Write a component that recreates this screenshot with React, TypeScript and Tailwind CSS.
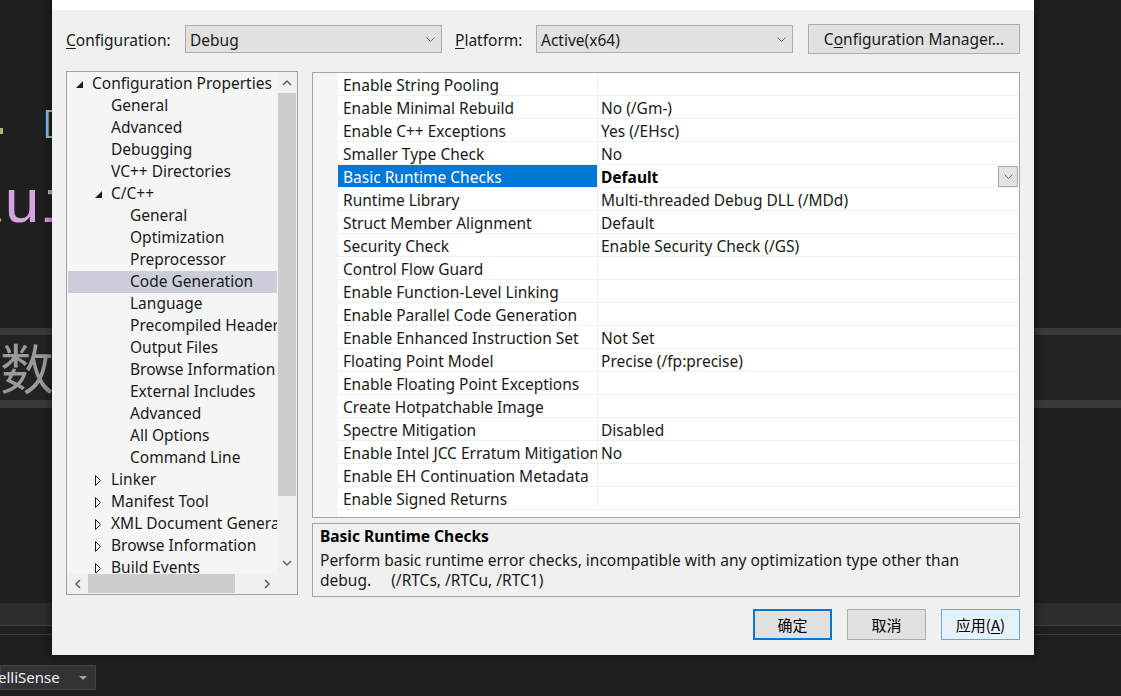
import React from 'react';

type TreeItem = { label: string; level: 0 | 1 | 2; exp?: 'open' | 'closed'; selected?: boolean };

const treeItems: TreeItem[] = [
  { label: 'Configuration Properties', level: 0, exp: 'open' },
  { label: 'General', level: 1 },
  { label: 'Advanced', level: 1 },
  { label: 'Debugging', level: 1 },
  { label: 'VC++ Directories', level: 1 },
  { label: 'C/C++', level: 1, exp: 'open' },
  { label: 'General', level: 2 },
  { label: 'Optimization', level: 2 },
  { label: 'Preprocessor', level: 2 },
  { label: 'Code Generation', level: 2, selected: true },
  { label: 'Language', level: 2 },
  { label: 'Precompiled Headers', level: 2 },
  { label: 'Output Files', level: 2 },
  { label: 'Browse Information', level: 2 },
  { label: 'External Includes', level: 2 },
  { label: 'Advanced', level: 2 },
  { label: 'All Options', level: 2 },
  { label: 'Command Line', level: 2 },
  { label: 'Linker', level: 1, exp: 'closed' },
  { label: 'Manifest Tool', level: 1, exp: 'closed' },
  { label: 'XML Document Generator', level: 1, exp: 'closed' },
  { label: 'Browse Information', level: 1, exp: 'closed' },
  { label: 'Build Events', level: 1, exp: 'closed' },
];

const indent = ['pl-[9px]', 'pl-[28px]', 'pl-[47px]'];

const properties: [string, string][] = [
  ['Enable String Pooling', ''],
  ['Enable Minimal Rebuild', 'No (/Gm-)'],
  ['Enable C++ Exceptions', 'Yes (/EHsc)'],
  ['Smaller Type Check', 'No'],
  ['Basic Runtime Checks', 'Default'],
  ['Runtime Library', 'Multi-threaded Debug DLL (/MDd)'],
  ['Struct Member Alignment', 'Default'],
  ['Security Check', 'Enable Security Check (/GS)'],
  ['Control Flow Guard', ''],
  ['Enable Function-Level Linking', ''],
  ['Enable Parallel Code Generation', ''],
  ['Enable Enhanced Instruction Set', 'Not Set'],
  ['Floating Point Model', 'Precise (/fp:precise)'],
  ['Enable Floating Point Exceptions', ''],
  ['Create Hotpatchable Image', ''],
  ['Spectre Mitigation', 'Disabled'],
  ['Enable Intel JCC Erratum Mitigation', 'No'],
  ['Enable EH Continuation Metadata', ''],
  ['Enable Signed Returns', ''],
];

const SELECTED_PROP = 4;

const ChevronDown = () => (
  <svg width="9" height="5" viewBox="0 0 9 5">
    <polyline points="0.5,0.5 4.5,4.5 8.5,0.5" fill="none" stroke="#6d6d6d" strokeWidth="1" />
  </svg>
);

// scrollbar arrow, one polyline per direction
const Arrow = ({ dir }: { dir: 'up' | 'down' | 'left' | 'right' }) => {
  const pts = {
    up: '1,6 5,2 9,6',
    down: '1,2 5,6 9,2',
    left: '6,1 2,5 6,9',
    right: '2,1 6,5 2,9',
  }[dir];
  const size = dir === 'up' || dir === 'down' ? { w: 10, h: 8 } : { w: 8, h: 10 };
  return (
    <svg width={size.w} height={size.h} viewBox={`0 0 ${size.w} ${size.h}`}>
      <polyline points={pts} fill="none" stroke="#606060" strokeWidth="1.5" />
    </svg>
  );
};

const Expander = ({ exp }: { exp?: 'open' | 'closed' }) => {
  if (exp === 'open')
    return (
      <svg width="16" height="9" viewBox="0 0 16 9">
        <polygon points="7,1 7,8 0,8" fill="#1e1e1e" />
      </svg>
    );
  if (exp === 'closed')
    return (
      <svg width="16" height="11" viewBox="0 0 16 11">
        <polygon points="0.5,0.5 5.5,5.5 0.5,10.5" fill="none" stroke="#1e1e1e" strokeWidth="1" />
      </svg>
    );
  return <span className="w-[16px]" />;
};

const Select = ({ value }: { value: string }) => (
  <div className="flex items-center justify-between w-[257px] h-[28px] bg-[#e1e1e1] border border-[#adadad] pl-[4px] pr-[6px]">
    <span className="pt-[1px]">{value}</span>
    <ChevronDown />
  </div>
);

const Tree = () => (
  <div className="w-[232px] h-[524px] border border-[#9ea2aa] bg-[#f5f5f5] flex flex-col">
    <div className="flex flex-1 min-h-0">
      <div className="flex-1 overflow-hidden pt-[1px]">
        {treeItems.map((item, i) => (
          <div
            key={i}
            className={`h-[22px] flex items-center pb-[2px] whitespace-nowrap ${indent[item.level]} ${
              item.selected ? 'bg-[#cccedb] ml-[1px]' : ''
            }`}
          >
            <span className="w-[16px] flex items-center shrink-0 pt-[2px]">
              <Expander exp={item.exp} />
            </span>
            <span className={item.selected ? '-ml-[1px]' : ''}>{item.label}</span>
          </div>
        ))}
      </div>
      <div className="w-[20px] flex flex-col bg-[#f0f0f0]">
        <div className="h-[21px] flex items-center justify-center">
          <Arrow dir="up" />
        </div>
        <div className="flex-1 flex flex-col px-[1px]">
          <div className="h-[403px] bg-[#cdcdcd]" />
        </div>
        <div className="h-[21px] flex items-center justify-center">
          <Arrow dir="down" />
        </div>
      </div>
    </div>
    <div className="h-[21px] flex bg-[#f0f0f0]">
      <div className="w-[21px] flex items-center justify-center">
        <Arrow dir="left" />
      </div>
      <div className="flex-1 flex items-center">
        <div className="w-[147px] h-[19px] bg-[#cdcdcd]" />
      </div>
      <div className="w-[21px] flex items-center justify-center">
        <Arrow dir="right" />
      </div>
      <div className="w-[20px]" />
    </div>
  </div>
);

const PropertyGrid = () => (
  <div className="h-[446px] border border-[#a5a5a5] bg-white flex">
    <div className="w-[25px] bg-[#f5f5f8]" />
    <div className="flex-1 flex flex-col">
      {properties.map(([name, value], i) => {
        const sel = i === SELECTED_PROP;
        return (
          <div key={i} className="h-[23px] flex border-b border-[#f0f0f0]">
            <div
              className={`w-[259px] shrink-0 flex items-center pl-[5px] pt-[2px] whitespace-nowrap overflow-hidden ${
                sel ? 'bg-[#0078d7] text-white' : ''
              }`}
            >
              {name}
            </div>
            <div className="flex-1 flex items-center justify-between border-l border-[#f0f0f0] pl-[3px]">
              <span className={`pt-[2px] ${sel ? 'font-bold text-black' : ''}`}>{value}</span>
              {sel && (
                <div className="w-[20px] h-[21px] mr-[1px] bg-[#e3e3e3] border border-[#a8a8a8] flex items-center justify-center">
                  <ChevronDown />
                </div>
              )}
            </div>
          </div>
        );
      })}
    </div>
  </div>
);

const Dialog = () => (
  <div className="absolute left-[52px] top-0 w-[982px] h-[655px] bg-[#f0f0f0] flex flex-col text-[15.5px] leading-[20px] text-[#1a1a1a] font-['Noto_Sans','Noto_Sans_CJK_SC',sans-serif] shadow-[0_0_10px_rgba(0,0,0,0.6)]">
    {/* title bar, mostly scrolled off the top */}
    <div className="h-[10px] bg-white overflow-hidden pl-[18px]">
      <div className="-mt-[20px] text-black">ConsoleApplication1 Property Pages</div>
    </div>

    <div className="flex flex-col flex-1 pl-[14px] pr-[14px]">
      <div className="flex items-center h-[30px] mt-[14px]">
        <span className="w-[119px] pt-[1px]">
          <span className="underline underline-offset-2">C</span>onfiguration:
        </span>
        <Select value="Debug" />
        <span className="ml-[13px] w-[81px] pt-[1px]">
          <span className="underline underline-offset-2">P</span>latform:
        </span>
        <Select value="Active(x64)" />
        <div className="ml-[15px] w-[212px] h-[30px] bg-[#e1e1e1] border border-[#adadad] flex items-center justify-center">
          C<span className="underline underline-offset-2">o</span>nfiguration Manager...
        </div>
      </div>

      <div className="flex gap-[14px] mt-[17px] h-[526px]">
        <Tree />
        <div className="flex-1 flex flex-col pt-[1px] gap-[5px]">
          <PropertyGrid />
          <div className="h-[74px] border border-[#a5a5a5] px-[7px] pt-[2px]">
            <div className="font-bold text-black">Basic Runtime Checks</div>
            <div className="mt-[4px]">
              Perform basic runtime error checks, incompatible with any optimization type other than
              <br />
              debug.&nbsp;&nbsp;&nbsp;&nbsp; (/RTCs, /RTCu, /RTC1)
            </div>
          </div>
        </div>
      </div>

      <div className="flex justify-end gap-[15px] mt-[12px] font-['Noto_Sans_CJK_SC',sans-serif] text-[15px] text-black">
        <div className="w-[79px] h-[31px] bg-[#e1e1e1] border-2 border-[#0078d7] flex items-center justify-center">确定</div>
        <div className="w-[79px] h-[31px] bg-[#e1e1e1] border border-[#adadad] flex items-center justify-center">取消</div>
        <div className="w-[79px] h-[31px] bg-[#e5f1fb] border border-[#6fa7dc] flex items-center justify-center">
          应用(<span className="underline underline-offset-2">A</span>)
        </div>
      </div>
    </div>
  </div>
);

export default function App() {
  return (
    <div className="relative w-[1121px] h-[696px] bg-[#1f1f1f] overflow-hidden">
      {/* editor behind the dialog */}
      <div className="flex flex-col">
        <div className="h-[108px]" />
        <div className="h-[32px] flex items-end font-['Liberation_Mono',monospace] text-[30px] leading-[32px]">
          <span className="w-[3px] h-[6px] mb-[6px] bg-[#a8b86a]" />
          <span className="ml-[37px] text-[#8fc9ef]">[</span>
        </div>
        <div className="h-[38px]" />
        <div className="h-[56px] flex items-center font-['Liberation_Mono',monospace] text-[62px] leading-[56px] whitespace-nowrap">
          <span className="-ml-[34px] text-[#d7a06a]">a</span>
          <span className="text-[#d5a3e0]">ui</span>
        </div>
        <div className="h-[94px]" />
        <div className="h-[7px] bg-[#3a3a3a]" />
        <div className="h-[65px] bg-[#232323] flex items-center whitespace-nowrap text-[#9a9a9a] text-[54px] leading-[60px] font-['Noto_Sans_CJK_SC',sans-serif]">
          <span className="-mt-[2px]">数值</span>
        </div>
        <div className="h-[8px] bg-[#3a3a3a]" />
        <div className="h-[195px]" />
        <div className="h-[22px] bg-[#2d2d2d]" />
        <div className="h-[1px] bg-[#404040]" />
        <div className="h-[8px]" />
        <div className="h-[1px] bg-[#3a3a3a]" />
        <div className="h-[30px]" />
        <div className="w-[96px] h-[25px] bg-[#333337] border border-[#434346] flex items-center justify-between pr-[8px] text-[#f1f1f1] text-[15px] font-['Noto_Sans',sans-serif]">
          <span className="-ml-[3px]">elliSense</span>
          <svg width="8" height="4" viewBox="0 0 8 4">
            <polygon points="0,0 8,0 4,4" fill="#a0a0a0" />
          </svg>
        </div>
      </div>
      <Dialog />
    </div>
  );
}
